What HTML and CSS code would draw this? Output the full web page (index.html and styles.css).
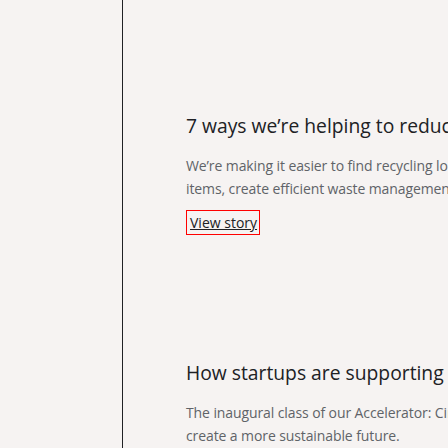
FILE: index.html
```html
<!DOCTYPE html>
<html lang="en">
<head>
<meta charset="utf-8">
<title>Stories</title>
<link rel="stylesheet" href="styles.css">
</head>
<body>
<div class="page">
  <aside class="rail"></aside>
  <main class="feed">
    <section class="story">
      <h2 class="story-title">7 ways we’re helping to reduce waste</h2>
      <p class="story-text">We’re making it easier to find recycling locations for plastic items, create efficient waste management and more.</p>
      <a class="story-link" href="#">View story</a>
    </section>
    <section class="story">
      <h2 class="story-title">How startups are supporting a circular economy</h2>
      <p class="story-text">The inaugural class of our Accelerator: Circular Economy will create a more sustainable future.</p>
      <a class="story-link" href="#">View story</a>
    </section>
  </main>
</div>
</body>
</html>
```
FILE: styles.css
```css
html, body {
  margin: 0;
  padding: 0;
  background: #f6f3f2;
  overflow: hidden;
}
body {
  font-family: "Open Sans", Roboto, "Liberation Sans", sans-serif;
  color: #202124;
}
.page {
  display: flex;
  height: 448px;
  width: 700px;
}
.rail {
  width: 122px;
  flex: none;
  border-right: 1px solid #202124;
}
.feed {
  flex: none;
  width: 410px;
  padding: 112px 0 0 63px;
  display: flex;
  flex-direction: column;
  gap: 124px;
}
.story {
  display: flex;
  flex-direction: column;
  align-items: flex-start;
}
.story-title {
  margin: 0;
  font-size: 19.3px;
  line-height: 28px;
  font-weight: 400;
  white-space: nowrap;
  color: #202124;
}
.story-text {
  margin: 14px 0 10px;
  font-size: 14px;
  line-height: 23px;
  letter-spacing: -0.1px;
  color: #5f6368;
}
.story-link {
  display: inline-block;
  font-size: 14px;
  line-height: 19px;
  padding: 2px 2px 2px 3px;
  border: 1px solid #ff0000;
  color: #202124;
  text-decoration: underline;
}
```
